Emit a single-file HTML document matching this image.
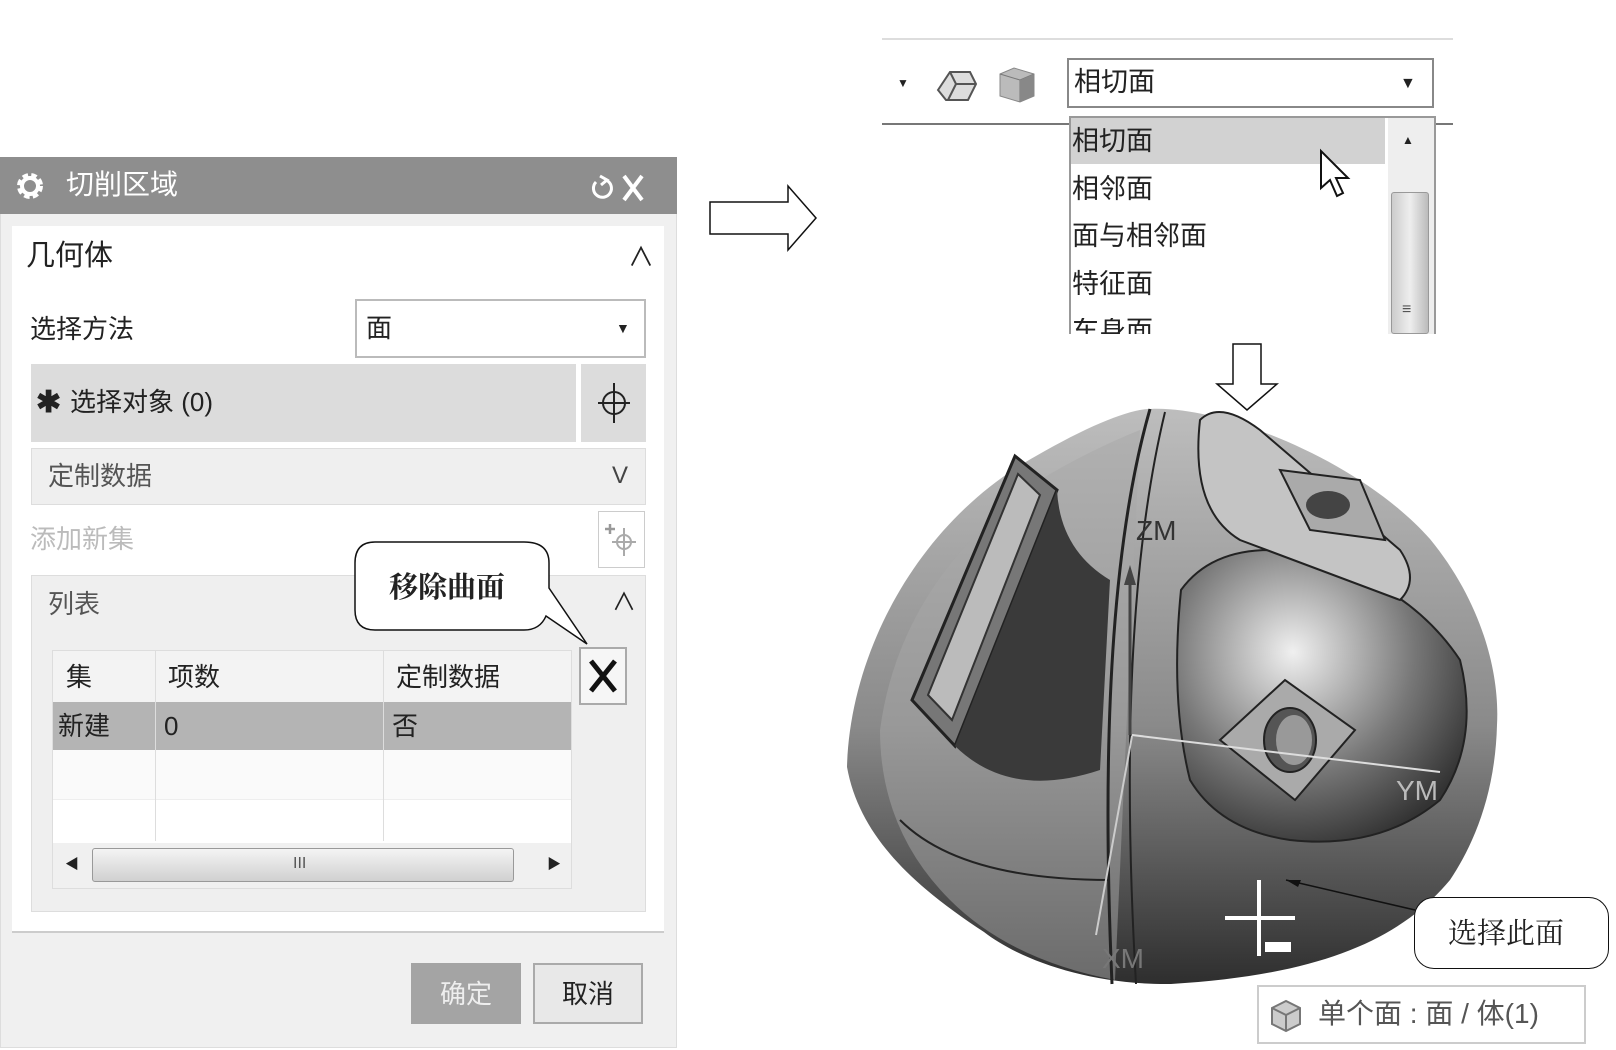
<!DOCTYPE html>
<html><head><meta charset="utf-8"><style>
body{margin:0;width:1616px;height:1050px;background:#fff;position:relative;overflow:hidden;font-family:"Liberation Sans","Noto Sans CJK SC",sans-serif;color:#222}
.a{position:absolute;box-sizing:border-box}
.t{position:absolute;white-space:nowrap;line-height:1}
</style></head><body>
<!-- dialog -->
<div class="a" style="left:0;top:157px;width:677px;height:891px;background:#f0f0f0;border:1px solid #ddd"></div>
<div class="a" style="left:0;top:157px;width:677px;height:57px;background:#8e8e8e"></div>
<svg class="a" style="left:14px;top:170px" width="32" height="32" viewBox="0 0 32 32"><circle cx="16" cy="16" r="10" fill="none" stroke="#fff" stroke-width="6" stroke-dasharray="5 3"/><circle cx="16" cy="16" r="8" fill="none" stroke="#fff" stroke-width="4"/><circle cx="16" cy="16" r="3.5" fill="#8e8e8e"/></svg>
<div class="t" style="left:66px;top:171px;font-size:28px;color:#fff">切削区域</div>
<svg class="a" style="left:588px;top:172px" width="60" height="32" viewBox="0 0 60 32"><path d="M8 10 A9 9 0 1 0 18 8" fill="none" stroke="#fff" stroke-width="3"/><path d="M12 4 L19 8 L13 13" fill="none" stroke="#fff" stroke-width="3"/><path d="M36 4 L54 28 M54 4 L36 28" stroke="#fff" stroke-width="4"/></svg>
<div class="a" style="left:12px;top:226px;width:652px;height:706px;background:#fff"></div>
<div class="a" style="left:12px;top:931px;width:652px;height:2px;background:#ccc"></div>
<div class="t" style="left:26px;top:242px;font-size:29px">几何体</div>
<div class="t" style="left:628px;top:244px;font-size:26px">∧</div>
<div class="t" style="left:30px;top:316px;font-size:26px">选择方法</div>
<div class="a" style="left:355px;top:299px;width:291px;height:59px;border:2px solid #bbb;background:#fff"></div>
<div class="t" style="left:366px;top:315px;font-size:26px">面</div>
<div class="t" style="left:616px;top:321px;font-size:14px">▼</div>
<div class="a" style="left:31px;top:364px;width:545px;height:78px;background:#dcdcdc"></div>
<div class="a" style="left:581px;top:364px;width:65px;height:78px;background:#dcdcdc"></div>
<div class="t" style="left:36px;top:388px;font-size:30px;font-weight:bold">✱</div>
<div class="t" style="left:70px;top:389px;font-size:26px">选择对象 (0)</div>
<svg class="a" style="left:594px;top:381px" width="40" height="44" viewBox="0 0 40 44"><circle cx="20" cy="22" r="11" fill="none" stroke="#222" stroke-width="2"/><path d="M20 2V42M4 22H36" stroke="#222" stroke-width="2"/></svg>
<div class="a" style="left:31px;top:448px;width:615px;height:57px;background:#efefef;border:1px solid #ddd"></div>
<div class="t" style="left:48px;top:463px;font-size:26px;color:#555">定制数据</div>
<div class="t" style="left:612px;top:464px;font-size:24px;color:#444">V</div>
<div class="t" style="left:30px;top:526px;font-size:26px;color:#bbb">添加新集</div>
<div class="a" style="left:598px;top:511px;width:47px;height:57px;border:1px solid #ccc;background:#fff"></div>
<svg class="a" style="left:604px;top:520px" width="36" height="40" viewBox="0 0 36 40"><path d="M6 4V14M1 9H11" stroke="#999" stroke-width="2.5"/><circle cx="20" cy="22" r="7" fill="none" stroke="#aaa" stroke-width="2"/><path d="M20 8V36M8 22H32" stroke="#aaa" stroke-width="2"/></svg>
<div class="a" style="left:31px;top:575px;width:615px;height:337px;background:#efefef;border:1px solid #ddd"></div>
<div class="t" style="left:48px;top:591px;font-size:26px;color:#555">列表</div>
<div class="t" style="left:612px;top:591px;font-size:24px">∧</div>
<div class="a" style="left:52px;top:650px;width:520px;height:239px;background:#fff;border:1px solid #ddd"></div>
<div class="a" style="left:53px;top:651px;width:518px;height:51px;background:#f3f3f3"></div>
<div class="a" style="left:53px;top:702px;width:518px;height:48px;background:#b4b4b4"></div>
<div class="a" style="left:53px;top:750px;width:518px;height:50px;background:#fafafa;border-bottom:1px solid #eee"></div>
<div class="a" style="left:155px;top:651px;width:1px;height:190px;background:#ddd"></div>
<div class="a" style="left:383px;top:651px;width:1px;height:190px;background:#ddd"></div>
<div class="t" style="left:66px;top:664px;font-size:26px">集</div>
<div class="t" style="left:168px;top:664px;font-size:26px">项数</div>
<div class="t" style="left:396px;top:664px;font-size:26px">定制数据</div>
<div class="t" style="left:58px;top:713px;font-size:26px">新建</div>
<div class="t" style="left:164px;top:713px;font-size:26px">0</div>
<div class="t" style="left:392px;top:713px;font-size:26px">否</div>
<div class="a" style="left:53px;top:843px;width:518px;height:45px;background:#f0f0f0"></div>
<div class="a" style="left:92px;top:848px;width:422px;height:34px;border:1px solid #999;border-radius:3px;background:linear-gradient(#f4f4f4,#d0d0d0)"></div>
<div class="t" style="left:293px;top:856px;font-size:16px;color:#555">III</div>
<div class="t" style="left:65px;top:857px;font-size:14px">◀</div>
<div class="t" style="left:547px;top:857px;font-size:14px">▶</div>
<div class="a" style="left:579px;top:647px;width:48px;height:58px;border:2px solid #aaa;background:#f6f6f6"></div>
<svg class="a" style="left:587px;top:658px" width="32" height="36" viewBox="0 0 32 36"><path d="M4 3L28 33M28 3L4 33" stroke="#111" stroke-width="5"/></svg>
<div class="a" style="left:411px;top:963px;width:110px;height:61px;background:#a4a4a4"></div>
<div class="t" style="left:440px;top:981px;font-size:26px;color:#eee">确定</div>
<div class="a" style="left:533px;top:963px;width:110px;height:61px;background:#e8e8e8;border:2px solid #aaa"></div>
<div class="t" style="left:562px;top:981px;font-size:26px">取消</div>
<!-- callout left -->
<svg class="a" style="left:350px;top:538px" width="250" height="110" viewBox="0 0 250 110"><path d="M25 4 H174 Q199 4 199 25 V50 L237 106 L196 78 Q190 92 174 92 H25 Q5 92 5 72 V25 Q5 4 25 4Z" fill="#fff" stroke="#111" stroke-width="1.5"/></svg>
<div class="t" style="left:389px;top:574px;font-size:29px;font-family:'Liberation Serif','Noto Serif CJK SC',serif;font-weight:bold">移除曲面</div>
<!-- right arrow -->
<svg class="a" style="left:708px;top:184px" width="112" height="68" viewBox="0 0 112 68"><path d="M2 18H80V2L108 34L80 66V50H2Z" fill="#fff" stroke="#111" stroke-width="1.5"/></svg>
<!-- toolbar -->
<div class="a" style="left:882px;top:38px;width:571px;height:2px;background:#ddd"></div>
<div class="a" style="left:882px;top:123px;width:571px;height:2px;background:#777"></div>
<div class="t" style="left:897px;top:77px;font-size:12px">▼</div>
<svg class="a" style="left:934px;top:64px" width="110" height="40" viewBox="0 0 110 40"><path d="M4 26 L16 8 H36 L42 20 L34 36 H12Z" fill="#ddd" stroke="#555" stroke-width="2"/><path d="M16 8 L22 20 H42 M22 20 L14 36" stroke="#555" stroke-width="2" fill="none"/><path d="M66 10 L80 4 L100 10 V32 L86 38 L66 32Z" fill="#bbb" stroke="#888"/><path d="M66 10 L86 16 L100 10 M86 16 V38" stroke="#777" fill="none"/><path d="M86 16 L100 10 V32 L86 38Z" fill="#888"/></svg>
<div class="a" style="left:1067px;top:58px;width:367px;height:50px;border:2px solid #888;background:#fff"></div>
<div class="t" style="left:1074px;top:69px;font-size:27px">相切面</div>
<div class="t" style="left:1400px;top:76px;font-size:16px">▼</div>
<div class="a" style="left:1069px;top:116px;width:367px;height:218px;border:2px solid #999;border-bottom:none;background:#fff;overflow:hidden"></div>
<div class="a" style="left:1071px;top:118px;width:314px;height:46px;background:#d2d2d2"></div>
<div class="t" style="left:1072px;top:128px;font-size:27px">相切面</div>
<div class="t" style="left:1072px;top:176px;font-size:27px">相邻面</div>
<div class="t" style="left:1072px;top:223px;font-size:27px">面与相邻面</div>
<div class="t" style="left:1072px;top:271px;font-size:27px">特征面</div>
<div class="a" style="left:1071px;top:318px;width:314px;height:16px;overflow:hidden"><div class="t" style="left:1px;top:0;font-size:27px">车身面</div></div>
<div class="a" style="left:1388px;top:118px;width:46px;height:216px;background:#eee"></div>
<div class="t" style="left:1402px;top:134px;font-size:12px">▲</div>
<div class="a" style="left:1391px;top:192px;width:38px;height:142px;border:1px solid #999;border-radius:3px;background:linear-gradient(90deg,#ccc,#eee,#bbb)"></div>
<div class="t" style="left:1402px;top:302px;font-size:16px;color:#555">≡</div>
<svg class="a" style="left:1318px;top:148px" width="40" height="54" viewBox="0 0 40 54"><path d="M3 3V40L12 32L19 48L25 45L18 30H30Z" fill="#fff" stroke="#111" stroke-width="2"/></svg>
<!-- down arrow -->
<svg class="a" style="left:1215px;top:342px" width="64" height="70" viewBox="0 0 64 70"><path d="M18 2H46V42H62L32 68L2 42H18Z" fill="#fff" stroke="#111" stroke-width="1.5"/></svg>
<!-- 3D model -->
<svg class="a" style="left:840px;top:400px" width="680" height="600" viewBox="0 0 680 600">
<defs><linearGradient id="g" x1="0" y1="0" x2="0" y2="1"><stop offset="0" stop-color="#bdbdbd"/><stop offset="0.55" stop-color="#8a8a8a"/><stop offset="1" stop-color="#2e2e2e"/></linearGradient>
<radialGradient id="h" cx="0.4" cy="0.35" r="0.7"><stop offset="0" stop-color="#f0f0f0"/><stop offset="0.6" stop-color="#777"/><stop offset="1" stop-color="#333"/></radialGradient></defs>
<path d="M7 367 C10 250 80 120 196 56 C250 25 290 9 310 9 C380 5 520 60 590 139 C640 200 660 270 657 325 C655 400 630 450 610 480 C560 540 480 575 331 584 C250 585 180 560 144 532 C80 490 20 440 7 367Z" fill="url(#g)"/>
<path d="M40 330 Q60 180 200 80 Q250 50 300 30 L275 580 Q170 560 110 500 Q40 430 40 330Z" fill="#a8a8a8" opacity="0.5"/>
<path d="M72 300 L175 56 L217 90 L115 346 Z" fill="#777" stroke="#222" stroke-width="3"/>
<path d="M88 295 L178 74 L200 95 L112 320Z" fill="#bbb" stroke="#333" stroke-width="2"/>
<path d="M115 346 Q170 400 260 370 L270 180 Q220 150 217 90Z" fill="#3a3a3a"/>
<path d="M60 420 Q120 480 270 480" stroke="#222" stroke-width="2" fill="none"/>
<path d="M310 9 Q255 200 272 584" stroke="#222" stroke-width="3" fill="none"/>
<path d="M325 12 Q275 220 296 584" stroke="#222" stroke-width="2" fill="none"/>
<path d="M341 190 Q370 150 430 150 Q560 170 620 260 Q640 340 600 400 Q540 450 450 440 Q380 430 350 380 Q330 300 341 190Z" fill="url(#h)" stroke="#222" stroke-width="2"/>
<path d="M380 340 L445 280 L515 330 L455 400Z" fill="#aaa" stroke="#222" stroke-width="2"/>
<ellipse cx="450" cy="340" rx="26" ry="32" fill="#555" stroke="#222" stroke-width="2"/>
<ellipse cx="454" cy="340" rx="18" ry="25" fill="#999"/>
<path d="M360 20 Q380 0 420 30 L560 150 Q580 180 560 200 L400 140 Q350 110 360 20Z" fill="#c4c4c4" stroke="#222" stroke-width="2"/>
<path d="M440 70 L520 80 L545 140 L470 130Z" fill="#aaa" stroke="#222" stroke-width="2"/>
<ellipse cx="488" cy="105" rx="22" ry="14" fill="#444"/>
<path d="M290 175 V335" stroke="#444" stroke-width="3"/><path d="M284 185 L290 165 L296 185Z" fill="#444"/>
<path d="M292 335 L600 372" stroke="#ddd" stroke-width="2"/>
<path d="M292 336 L256 535" stroke="#ccc" stroke-width="2"/>
<text x="296" y="140" font-size="28" fill="#333" font-family="Liberation Sans">ZM</text>
<text x="556" y="400" font-size="28" fill="#bbb" font-family="Liberation Sans">YM</text>
<text x="262" y="568" font-size="28" fill="#777" font-family="Liberation Sans">XM</text>
<path d="M385 518H455M419 480V556" stroke="#fff" stroke-width="4"/>
<rect x="425" y="542" width="26" height="10" fill="#fff"/>
<path d="M575 510 L446 480" stroke="#111" stroke-width="1.5"/><path d="M446 480 L461 480 L458 487Z" fill="#111"/>
</svg>
<div class="a" style="left:1414px;top:897px;width:195px;height:72px;border:1.5px solid #111;border-radius:20px;background:#fff"></div>
<div class="t" style="left:1448px;top:920px;font-size:29px;font-family:'Liberation Serif','Noto Serif CJK SC',serif">选择此面</div>
<div class="a" style="left:1257px;top:985px;width:329px;height:59px;border:2px solid #ccc;background:#fff"></div>
<svg class="a" style="left:1268px;top:998px" width="36" height="36" viewBox="0 0 36 36"><path d="M4 10L18 3L32 10V26L18 33L4 26Z" fill="#ccc" stroke="#777" stroke-width="2"/><path d="M4 10L18 17L32 10M18 17V33" stroke="#777" stroke-width="2" fill="none"/></svg>
<div class="t" style="left:1318px;top:1000px;font-size:28px;color:#555">单个面 : 面 / 体(1)</div>
</body></html>
